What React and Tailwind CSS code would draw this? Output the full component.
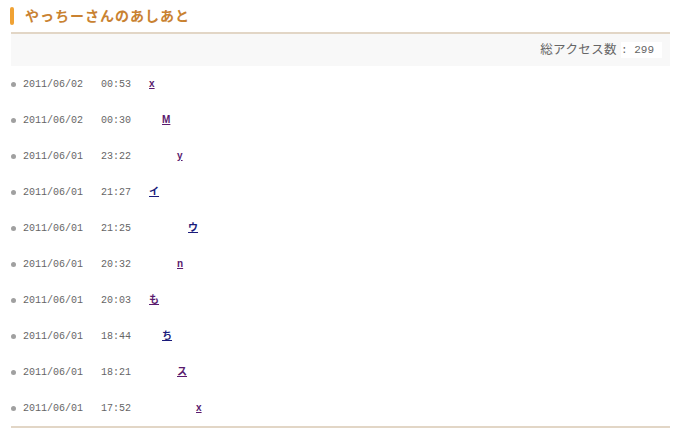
import React from 'react';

const rows = [
    {date: '2011/06/02', time: '00:53', name: 'x', pad: 'pl-[0px]', color: 'text-[#5a1a6e]'},
    {date: '2011/06/02', time: '00:30', name: 'M', pad: 'pl-[13px]', color: 'text-[#5a1a6e]'},
    {date: '2011/06/01', time: '23:22', name: 'y', pad: 'pl-[28px]', color: 'text-[#5a1a6e]'},
    {date: '2011/06/01', time: '21:27', name: 'イ', pad: 'pl-[0px]', color: 'text-[#1a1a7a]'},
    {date: '2011/06/01', time: '21:25', name: 'ウ', pad: 'pl-[39px]', color: 'text-[#1a1a7a]'},
    {date: '2011/06/01', time: '20:32', name: 'n', pad: 'pl-[28px]', color: 'text-[#5a1a6e]'},
    {date: '2011/06/01', time: '20:03', name: 'も', pad: 'pl-[0px]', color: 'text-[#5a1a6e]'},
    {date: '2011/06/01', time: '18:44', name: 'ち', pad: 'pl-[13px]', color: 'text-[#1a1a7a]'},
    {date: '2011/06/01', time: '18:21', name: 'ス', pad: 'pl-[28px]', color: 'text-[#5a1a6e]'},
    {date: '2011/06/01', time: '17:52', name: 'x', pad: 'pl-[47px]', color: 'text-[#5a1a6e]'},
];

function App() {
    return (
        <div className="w-[680px] h-[433px] bg-white overflow-hidden" style={{fontFamily: '"Liberation Sans", "Noto Sans CJK JP", sans-serif'}}>
            <div className="flex items-center h-[32px] pl-[10px]">
                <div className="w-[4px] h-[18px] rounded-[2px] bg-[#f0a234]"></div>
                <h1 className="ml-[11px] text-[14px] font-bold tracking-[1px] text-[#c98231]">やっちーさんのあしあと</h1>
            </div>
            <div className="mx-[11px] w-[659px]">
                <div className="h-[2px] bg-[#e2d6c6]"></div>
                <div className="h-[32px] bg-[#f8f8f8] flex items-center justify-end pr-[8px] text-[12.5px] text-[#666]">
                    <span className="tracking-[0.4px]">総アクセス数</span>
                    <span className="text-[11px] ml-[4px] bg-white pr-[8px]" style={{fontFamily: '"Liberation Mono", monospace'}}>: 299</span>
                </div>
                <ul>
                    {rows.map((r, i) => (
                        <li key={i} className="h-[36px] flex items-center text-[10px] text-[#666]" style={{fontFamily: '"Liberation Mono", "Noto Sans CJK JP", monospace'}}>
                            <span className="w-[5px] h-[5px] rounded-full bg-[#a0a0a0] mr-[7px]"></span>
                            <span>{r.date}</span>
                            <span className="ml-[18px]">{r.time}</span>
                            <span className={`ml-[18px] ${r.pad}`}>
                                <a href="#" className={`font-bold underline ${r.color}`} style={{fontFamily: '"Liberation Sans", "Noto Sans CJK JP", sans-serif'}}>{r.name}</a>
                            </span>
                        </li>
                    ))}
                </ul>
                <div className="h-[2px] bg-[#e2d6c6]"></div>
            </div>
        </div>
    );
}

export default App;
